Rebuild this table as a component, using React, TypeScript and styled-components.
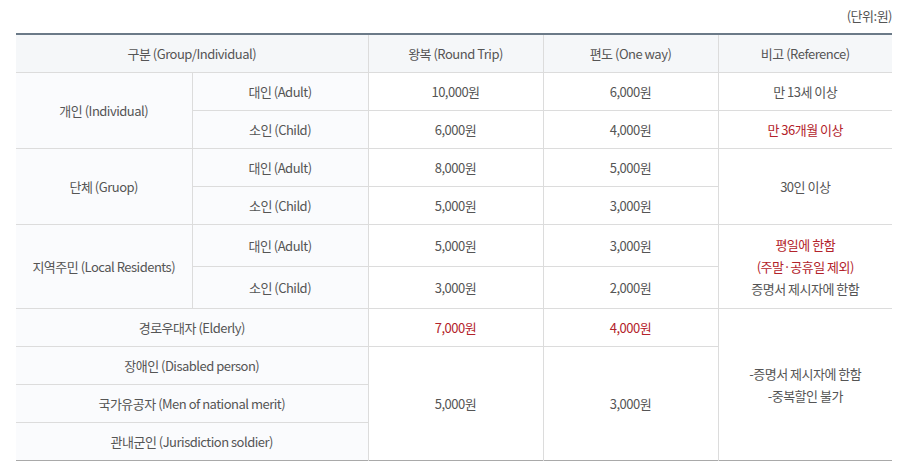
import React from "react";
import styled, { createGlobalStyle } from "styled-components";

const GlobalStyle = createGlobalStyle`
  body {
    margin: 0;
    background: #fff;
    font-family: "Noto Sans CJK KR", "Noto Sans", sans-serif;
    color: #555;
  }
`;

const Wrap = styled.div`
  padding: 4px 12px 0 16px;
`;

const Unit = styled.p`
  margin: 0 0 6px;
  text-align: right;
  font-size: 13px;
  line-height: 23px;
  letter-spacing: -0.5px;
  color: #555;
`;

const Table = styled.table`
  width: 876px;
  border-collapse: collapse;
  table-layout: fixed;
  border-top: 2px solid #6b7a88;
  border-bottom: 1px solid #a9a9a9;
  font-size: 13px;
  letter-spacing: -0.5px;
`;

const Col = styled.col<{ $w: number }>`
  width: ${(p) => p.$w}px;
`;

const Th = styled.th`
  height: 37px;
  padding: 0 8px;
  background: #f5f7f9;
  font-weight: 400;
  color: #555;
  text-align: center;
  border-bottom: 1px solid #dcdcdc;
  border-left: 1px solid #dcdcdc;
  &:first-child {
    border-left: none;
  }
`;

const Td = styled.td<{ $label?: boolean; $red?: boolean; $edge?: boolean; $tall?: boolean }>`
  height: ${(p) => (p.$tall ? 41 : 37)}px;
  padding: 0 8px;
  text-align: center;
  line-height: 22px;
  background: ${(p) => (p.$label ? "#fafbfd" : "#fff")};
  color: ${(p) => (p.$red ? "#b3232b" : "#555")};
  border-top: 1px solid #dcdcdc;
  border-left: ${(p) => (p.$edge ? "none" : "1px solid #dcdcdc")};
`;

const Red = styled.span`
  display: block;
  color: #b3232b;
`;

const Line = styled.span`
  display: block;
`;

const widths = [176, 176, 175, 175, 174];

export default function App() {
  return (
    <Wrap>
      <GlobalStyle />
      <Unit>(단위:원)</Unit>
      <Table>
        <colgroup>
          {widths.map((w, i) => (
            <Col key={i} $w={w} />
          ))}
        </colgroup>
        <thead>
          <tr>
            <Th colSpan={2}>구분 (Group/Individual)</Th>
            <Th>왕복 (Round Trip)</Th>
            <Th>편도 (One way)</Th>
            <Th>비고 (Reference)</Th>
          </tr>
        </thead>
        <tbody>
          <tr>
            <Td $label $edge rowSpan={2}>개인 (Individual)</Td>
            <Td $label>대인 (Adult)</Td>
            <Td>10,000원</Td>
            <Td>6,000원</Td>
            <Td>만 13세 이상</Td>
          </tr>
          <tr>
            <Td $label>소인 (Child)</Td>
            <Td>6,000원</Td>
            <Td>4,000원</Td>
            <Td $red>만 36개월 이상</Td>
          </tr>
          <tr>
            <Td $label $edge rowSpan={2}>단체 (Gruop)</Td>
            <Td $label>대인 (Adult)</Td>
            <Td>8,000원</Td>
            <Td>5,000원</Td>
            <Td rowSpan={2}>30인 이상</Td>
          </tr>
          <tr>
            <Td $label>소인 (Child)</Td>
            <Td>5,000원</Td>
            <Td>3,000원</Td>
          </tr>
          <tr>
            <Td $label $edge $tall rowSpan={2}>지역주민 (Local Residents)</Td>
            <Td $label $tall>대인 (Adult)</Td>
            <Td $tall>5,000원</Td>
            <Td $tall>3,000원</Td>
            <Td rowSpan={2}>
              <Red>평일에 한함</Red>
              <Red>(주말·공휴일 제외)</Red>
              <Line>증명서 제시자에 한함</Line>
            </Td>
          </tr>
          <tr>
            <Td $label $tall>소인 (Child)</Td>
            <Td $tall>3,000원</Td>
            <Td $tall>2,000원</Td>
          </tr>
          <tr>
            <Td $label $edge colSpan={2}>경로우대자 (Elderly)</Td>
            <Td $red>7,000원</Td>
            <Td $red>4,000원</Td>
            <Td rowSpan={4}>
              <Line>-증명서 제시자에 한함</Line>
              <Line>-중복할인 불가</Line>
            </Td>
          </tr>
          <tr>
            <Td $label $edge colSpan={2}>장애인 (Disabled person)</Td>
            <Td rowSpan={3}>5,000원</Td>
            <Td rowSpan={3}>3,000원</Td>
          </tr>
          <tr>
            <Td $label $edge colSpan={2}>국가유공자 (Men of national merit)</Td>
          </tr>
          <tr>
            <Td $label $edge colSpan={2}>관내군인 (Jurisdiction soldier)</Td>
          </tr>
        </tbody>
      </Table>
    </Wrap>
  );
}
